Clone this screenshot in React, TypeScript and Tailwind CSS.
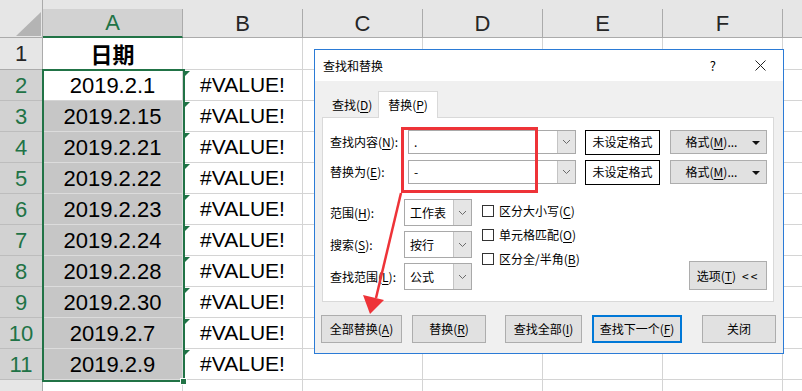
import React from "react"

const cellFont = { fontFamily: '"Liberation Sans", "Noto Sans CJK SC", sans-serif' }
const uiFont = { fontFamily: '"Noto Sans CJK SC", "Liberation Sans", sans-serif' }

const dates = ["2019.2.1", "2019.2.15", "2019.2.21", "2019.2.22", "2019.2.23", "2019.2.24", "2019.2.28", "2019.2.30", "2019.2.7", "2019.2.9"]
const otherCols = ["C", "D", "E", "F"]

function Chevron() {
  return (
    <svg width="9" height="6" viewBox="0 0 9 6">
      <path d="M1 1 L4.5 4.5 L8 1" fill="none" stroke="#6b6b6b" strokeWidth="1" />
    </svg>
  )
}

function Combo({ value, width }: { value: string; width: string }) {
  return (
    <div className={`${width} h-full flex border border-[#a9a9a9] bg-white`}>
      <div className="flex-1 flex items-center pl-[5px] text-[12px]">{value}</div>
      <div className="w-[18px] flex items-center justify-center border-l border-[#c4c4c4] bg-[#e5e5e5]">
        <Chevron />
      </div>
    </div>
  )
}

function Btn({ children, className = "" }: { children: React.ReactNode; className?: string }) {
  return (
    <div className={`h-[28px] flex items-center justify-center bg-[#e1e1e1] border border-[#adadad] text-[12px] text-black ${className}`}>
      {children}
    </div>
  )
}

function U({ children }: { children: React.ReactNode }) {
  return <span className="underline underline-offset-2">{children}</span>
}

function ErrFlag() {
  return (
    <svg className="absolute left-[1px] top-[1px]" width="6" height="6" viewBox="0 0 6 6">
      <path d="M0 0 H6 L0 6 Z" fill="#1e7145" />
    </svg>
  )
}

function FormatBtn() {
  return (
    <Btn className="ml-[10px] w-[97px] !h-[24px] relative">
      <span className="mr-[14px]">格式(<U>M</U>)...</span>
      <svg className="absolute right-[6px] top-[10px]" width="8" height="4" viewBox="0 0 8 4">
        <path d="M0 0 H8 L4 4 Z" fill="#111" />
      </svg>
    </Btn>
  )
}

function Sheet() {
  return (
    <div className="w-[802px] h-[391px] overflow-hidden bg-white text-black" style={cellFont}>
      {/* column header band */}
      <div className="flex h-[38px] bg-[#e6e6e6]">
        <div className="w-[43px] shrink-0 relative border-r border-b border-[#ababab]">
          <svg className="absolute left-[16px] top-[12px]" width="25" height="24" viewBox="0 0 25 24">
            <path d="M25 0 V24 H0 Z" fill="#b4b4b4" />
          </svg>
        </div>
        <div className="w-[140px] shrink-0 mt-[9px] flex items-center justify-center bg-[#d2d2d2] border-r border-[#ababab] border-b-2 border-b-[#217346] text-[22px] text-[#217346]">A</div>
        <div className="w-[120px] shrink-0 mt-[9px] flex items-center justify-center border-r border-b border-[#ababab] text-[22px] text-[#262626]">B</div>
        {otherCols.map((c) => (
          <div key={c} className="w-[120px] shrink-0 mt-[9px] flex items-center justify-center border-r border-b border-[#ababab] text-[22px] text-[#262626]">{c}</div>
        ))}
        <div className="flex-1 mt-[9px] border-b border-[#ababab]" />
      </div>

      {/* row 1 */}
      <div className="flex h-[32px]">
        <div className="w-[43px] shrink-0 flex items-center justify-center bg-[#e6e6e6] border-r border-b border-[#ababab] text-[22px] text-[#262626]">1</div>
        <div className="w-[140px] shrink-0 flex items-center justify-center border-r border-b border-[#d4d4d4] text-[22px] font-bold" style={uiFont}>日期</div>
        <div className="w-[120px] shrink-0 border-r border-b border-[#d4d4d4]" />
        {otherCols.map((c) => (
          <div key={c} className="w-[120px] shrink-0 border-r border-b border-[#d4d4d4]" />
        ))}
        <div className="flex-1 border-b border-[#d4d4d4]" />
      </div>

      {dates.map((d, i) => (
        <div key={d} className="flex h-[31px]">
          <div className="w-[43px] shrink-0 flex items-center justify-center bg-[#d2d2d2] border-r border-[#ababab] border-b border-b-[#bdbdbd] text-[22px] text-[#217346]">{i + 2}</div>
          <div className={`w-[140px] shrink-0 flex items-center justify-center border-r border-b text-[22px] ${i === 0 ? "bg-white border-[#d4d4d4]" : "bg-[#c6c6c6] border-[#dcdcdc]"}`}>{d}</div>
          <div className="w-[120px] shrink-0 relative flex items-center justify-center border-r border-b border-[#d4d4d4] text-[21px]">
            <ErrFlag />
            #VALUE!
          </div>
          {otherCols.map((c) => (
            <div key={c} className="w-[120px] shrink-0 border-r border-b border-[#d4d4d4]" />
          ))}
          <div className="flex-1 border-b border-[#d4d4d4]" />
        </div>
      ))}

      {/* row 12, cut off by the window edge */}
      <div className="flex h-[31px]">
        <div className="w-[43px] shrink-0 flex items-start justify-center pt-[4px] bg-[#e6e6e6] border-r border-[#ababab] text-[22px] text-[#262626]">12</div>
        <div className="w-[140px] shrink-0 border-r border-[#d4d4d4]" />
        <div className="w-[120px] shrink-0 border-r border-[#d4d4d4]" />
        {otherCols.map((c) => (
          <div key={c} className="w-[120px] shrink-0 border-r border-[#d4d4d4]" />
        ))}
      </div>
    </div>
  )
}

function FindReplaceDialog() {
  return (
    <div className="absolute left-[314px] top-[49px] w-[470px] h-[305px] flex flex-col border border-[#2b7bd6] bg-[#f0f0f0] text-[12px] text-black" style={uiFont}>
      <div className="h-[31px] shrink-0 flex items-center bg-white pl-[8px]">
        <span>查找和替换</span>
        <span className="ml-auto mr-[39px] text-[13px]">?</span>
        <svg className="mr-[17px]" width="11" height="11" viewBox="0 0 11 11">
          <path d="M0.5 0.5 L10.5 10.5 M10.5 0.5 L0.5 10.5" stroke="#222" strokeWidth="1" />
        </svg>
      </div>

      {/* tabs */}
      <div className="mt-[9px] ml-[7px] flex items-end h-[27px]">
        <div className="w-[56px] h-[24px] flex items-center pl-[10px]">查找(<U>D</U>)</div>
        <div className="w-[60px] h-[27px] -mb-px relative z-10 flex items-center justify-center bg-white border border-b-0 border-[#d9d9d9]">替换(<U>P</U>)</div>
      </div>

      {/* tab panel */}
      <div className="ml-[7px] w-[452px] h-[185px] shrink-0 bg-white border border-[#d9d9d9] pt-[12px] pl-[7px]">
        <div className="flex h-[24px] items-center">
          <div className="w-[78px]">查找内容(<U>N</U>):</div>
          <Combo value="." width="w-[168px]" />
          <div className="ml-[9px] w-[75px] h-[25px] flex items-center justify-center border border-black">未设定格式</div>
          <FormatBtn />
        </div>
        <div className="flex h-[24px] items-center mt-[6px]">
          <div className="w-[78px]">替换为(<U>E</U>):</div>
          <Combo value="-" width="w-[168px]" />
          <div className="ml-[9px] w-[75px] h-[25px] flex items-center justify-center border border-black">未设定格式</div>
          <FormatBtn />
        </div>

        <div className="flex mt-[15px]">
          <div className="flex flex-col gap-[5px]">
            {[
              ["范围(", "H", "):", "工作表"],
              ["搜索(", "S", "):", "按行"],
              ["查找范围(", "L", "):", "公式"],
            ].map(([a, k, b, v]) => (
              <div key={v} className="flex h-[27px] items-center">
                <div className="w-[74px] whitespace-nowrap">{a}<U>{k}</U>{b}</div>
                <Combo value={v} width="w-[68px]" />
              </div>
            ))}
          </div>
          <div className="ml-[10px] flex flex-col">
            {[
              ["区分大小写(", "C", ")"],
              ["单元格匹配(", "O", ")"],
              ["区分全/半角(", "B", ")"],
            ].map(([a, k, b]) => (
              <div key={k} className="flex h-[24px] items-center">
                <div className="w-[12px] h-[12px] border border-[#333] bg-white" />
                <span className="ml-[5px]">{a}<U>{k}</U>{b}</span>
              </div>
            ))}
          </div>
          <Btn className="ml-auto mr-[6px] self-end w-[78px] !h-[29px]">
            选项(<U>T</U>)<span className="ml-[6px] tracking-[2px]">&lt;&lt;</span>
          </Btn>
        </div>
      </div>

      {/* bottom buttons */}
      <div className="flex mt-[13px] ml-[6px]">
        <Btn className="w-[81px]">全部替换(<U>A</U>)</Btn>
        <Btn className="ml-[10px] w-[74px]">替换(<U>R</U>)</Btn>
        <Btn className="ml-[19px] w-[77px]">查找全部(<U>I</U>)</Btn>
        <Btn className="ml-[10px] w-[90px] border-2 !border-[#0078d7]">查找下一个(<U>F</U>)</Btn>
        <Btn className="ml-[20px] w-[74px]">关闭</Btn>
      </div>
    </div>
  )
}

export default function App() {
  return (
    <div className="relative w-[802px] h-[391px] overflow-hidden">
      <Sheet />

      {/* selection outline A2:A11 with fill handle */}
      <div className="absolute left-[42px] top-[69px] w-[143px] h-[313px] border-2 border-[#217346] pointer-events-none" />
      <div className="absolute left-[180px] top-[378px] w-[7px] h-[7px] bg-[#217346] border border-white" />

      <FindReplaceDialog />

      {/* red annotation */}
      <div className="absolute left-[401px] top-[127px] w-[137px] h-[66px] border-[3px] border-[#ee3338] pointer-events-none" />
      <svg className="absolute left-0 top-0 pointer-events-none" width="802" height="391" viewBox="0 0 802 391">
        <path d="M401 193 L376 298" stroke="#ee3338" strokeWidth="2.5" fill="none" />
        <path d="M370 314 L363 295 L384 300 Z" fill="#ee3338" />
      </svg>
    </div>
  )
}
